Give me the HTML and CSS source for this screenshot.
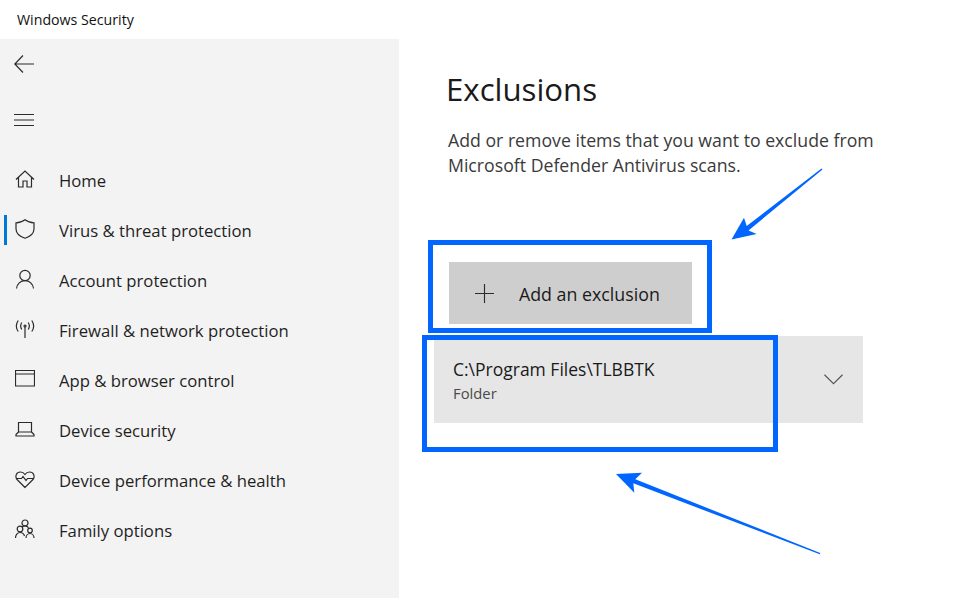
FILE: index.html
```html
<!DOCTYPE html>
<html lang="en">
  <head>
    <meta charset="UTF-8" />
    <meta name="viewport" content="width=device-width, initial-scale=1.0" />
    <title>Windows Security - Exclusions</title>
    <link rel="stylesheet" href="styles.css">
  </head>
  <body>
    <header class="titlebar">Windows Security</header>

    <div class="window">
      <aside class="sidebar">
        <button class="tool-btn back" aria-label="Back">
          <svg viewBox="0 0 20 20"><path d="M20 10H1M9 1.500 0.800 10 9 18.500"></path></svg>
        </button>
        <button class="tool-btn menu" aria-label="Menu">
          <svg viewBox="0 0 20 12"><path d="M0 .5H20M0 6H20M0 11.500H20"></path></svg>
        </button>

        <nav class="nav">
          <a class="nav-item">
            <svg viewBox="0 0 20 20"><path d="M1 10.500 10 2l9 8.500M3.500 8.500V18h4.500v-6h4v6h4.500V8.500"></path></svg>
            <span>Home</span>
          </a>
          <a class="nav-item active">
            <svg viewBox="0 0 20 20"><path d="M10 .8c2.500 2 5.500 3 9 3v6c0 4-3 7.500-9 9.500-6-2-9-5.500-9-9.500v-6c3.500 0 6.500-1 9-3z"></path></svg>
            <span>Virus &amp; threat protection</span>
          </a>
          <a class="nav-item">
            <svg viewBox="0 0 20 20"><circle cx="10" cy="6.500" r="5.200"></circle><path d="M1.500 19.500c.5-4.500 4-7.800 8.500-7.800s8 3.300 8.500 7.800"></path></svg>
            <span>Account protection</span>
          </a>
          <a class="nav-item">
            <svg viewBox="0 0 20 20"><circle cx="10" cy="7" r="1"></circle><path d="M10 8v11M6.800 3.500C5.500 5.500 5.500 8.500 6.800 10.500M13.200 3.500c1.300 2 1.300 5 0 7M3.200 1.500C.8 5 .8 9 3.200 12.500M16.800 1.500c2.400 3.500 2.400 7.500 0 11"></path></svg>
            <span>Firewall &amp; network protection</span>
          </a>
          <a class="nav-item">
            <svg viewBox="0 0 20 20"><path d="M.5 1.500h19v15.500H.5zM.5 5h19"></path></svg>
            <span>App &amp; browser control</span>
          </a>
          <a class="nav-item">
            <svg viewBox="0 0 20 20"><path d="M3.500 3.500h13V13h-13zM3.500 13 1 15.500V17h18v-1.500L16.500 13"></path></svg>
            <span>Device security</span>
          </a>
          <a class="nav-item">
            <svg viewBox="0 0 20 20"><path d="M10 18.500 2.500 11C-.5 8 1 3 5.500 3c2 0 3.500 1 4.500 2.500C11 4 12.500 3 14.500 3 19 3 20.500 8 17.500 11zM1 9.500h5.500L8 7.500l3 4 1.500-2H19"></path></svg>
            <span>Device performance &amp; health</span>
          </a>
          <a class="nav-item">
            <svg viewBox="0 0 20 20"><circle cx="10" cy="4" r="3"></circle><circle cx="5" cy="10" r="2.800"></circle><circle cx="15" cy="11.500" r="2.300"></circle><path d="M.5 19c0-3 2-5.500 4.500-5.500S9 15 9.500 17M11 19c0-2.500 1.800-4.500 4-4.500s4 2 4 4.500M7 8c.8-.8 1.800-1.200 3-1.200 1.500 0 2.800.8 3.500 2"></path></svg>
            <span>Family options</span>
          </a>
        </nav>
      </aside>

      <main class="content">
        <h1 class="title">Exclusions</h1>
        <p class="intro">Add or remove items that you want to exclude from Microsoft Defender Antivirus scans.</p>

        <button class="add-btn">
          <svg viewBox="0 0 20 20"><path d="M10 0V20M0 10H20"></path></svg>
          <span class="add-label">Add an exclusion</span>
        </button>

        <div class="exclusion">
          <div class="exclusion-text">
            <div class="exclusion-path">C:\Program Files\TLBBTK</div>
            <div class="exclusion-type">Folder</div>
          </div>
          <svg class="chevron" viewBox="0 0 20 11"><path d="M.5 .5 10 10 19.500 .5"></path></svg>
        </div>
      </main>
    </div>

    <!-- blue markup drawn over the screenshot -->
    <svg class="markup" viewBox="0 0 967 598">
      <rect x="430.500" y="242.500" width="279" height="88"></rect>
      <rect x="424.500" y="337.500" width="351" height="112"></rect>
      <path class="arrow" d="M731.500 239.500 744 217.700 746.700 226 821.500 168.500 822.500 169.500 748.500 230.500 756.700 234z"></path>
      <path class="arrow" d="M616 474 642 472.700 635.300 479.300 820.200 553 819.800 554.300 633.300 483.300 634.300 492.700z"></path>
    </svg>
  </body>
</html>
```

FILE: styles.css
```css
/* Page */
html,
body {
  height: 100%;
}

body {
  margin: 0;
  display: flex;
  flex-direction: column;
  position: relative;
  overflow: hidden;
  background: #ffffff;
  color: #1a1a1a;
  font-family: "Open Sans", "Noto Sans", sans-serif;
}

svg {
  display: block;
  fill: none;
  stroke: #2b2b2b;
  stroke-width: 1.2;
}

/* Title bar */
.titlebar {
  height: 39px;
  box-sizing: border-box;
  padding: 11px 0 0 17px;
  font-size: 14.200px;
  line-height: 18px;
  color: #111111;
}

.window {
  flex: 1;
  display: flex;
}

/* Sidebar */
.sidebar {
  width: 399px;
  flex-shrink: 0;
  background: #f3f3f3;
}

.tool-btn {
  display: block;
  padding: 0;
  border: 0;
  background: none;
}

.back {
  margin: 15px 0 0 14px;
  width: 20px;
  height: 20px;
}

.menu {
  margin: 40px 0 0 14px;
  width: 20px;
  height: 12px;
}

.nav {
  margin-top: 29px;
}

.nav-item {
  position: relative;
  display: flex;
  align-items: center;
  height: 50px;
  padding-left: 15px;
  font-size: 16.700px;
  color: #1f1f1f;
}

.nav-item svg {
  width: 20px;
  height: 20px;
  margin: 0 24px 3px 0;
  flex-shrink: 0;
}

.nav-item.active::before {
  content: "";
  position: absolute;
  left: 4px;
  top: 10px;
  width: 3px;
  height: 30px;
  background: #0078d7;
}

/* Main content */
.content {
  flex: 1;
  padding: 28px 0 0 47px;
}

.title {
  margin: 0;
  font-size: 31.200px;
  line-height: 44px;
  font-weight: 400;
  color: #1a1a1a;
}

.intro {
  width: 450px;
  margin: 17px 0 0 2px;
  font-size: 17.700px;
  line-height: 25px;
  color: #3a3a3a;
}

.add-btn {
  display: flex;
  align-items: center;
  width: 243px;
  height: 62px;
  margin: 84px 0 0 3px;
  padding: 0 0 0 26px;
  border: 0;
  background: #cecece;
  font: inherit;
  font-size: 17.800px;
  color: #1a1a1a;
}

.add-btn svg {
  width: 19px;
  height: 19px;
  margin-right: 25px;
}

.add-label {
  padding-top: 2px;
}

.exclusion {
  display: flex;
  align-items: center;
  justify-content: space-between;
  width: 429px;
  height: 87px;
  box-sizing: border-box;
  margin: 12px 0 0 -12px;
  padding: 0 20px 0 19px;
  background: #e6e6e6;
}

.exclusion-path {
  font-size: 17.500px;
  line-height: 24px;
  color: #1a1a1a;
}

.exclusion-type {
  margin-top: 2px;
  font-size: 14.800px;
  line-height: 20px;
  color: #4a4a4a;
}

.chevron {
  width: 19px;
  height: 11px;
  stroke: #555555;
}

/* Blue annotation layer */
.markup {
  position: absolute;
  left: 0;
  top: 0;
  width: 967px;
  height: 598px;
  stroke: none;
}

.markup rect {
  fill: none;
  stroke: #0066ff;
  stroke-width: 5;
}

.markup .arrow {
  fill: #0066ff;
  stroke: none;
}
```
